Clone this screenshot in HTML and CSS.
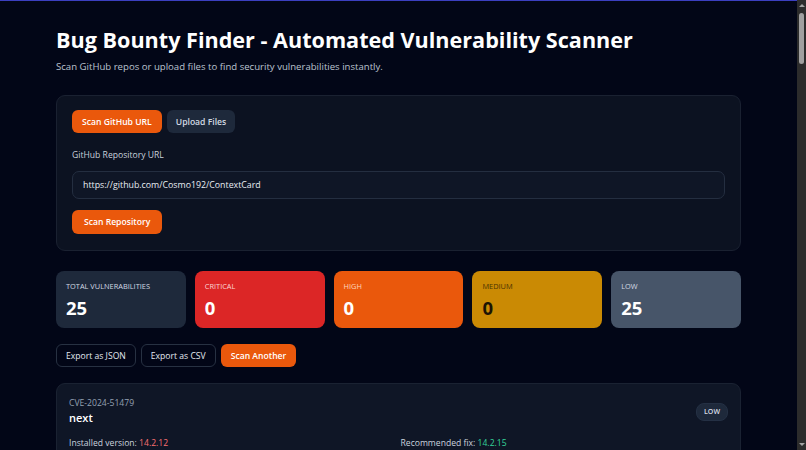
FILE: index.html
```html
<!DOCTYPE html>
<html lang="en">
<head>
<meta charset="utf-8">
<title>Bug Bounty Finder</title>
<link rel="stylesheet" href="styles.css">
</head>
<body>
<div class="accent-bar"></div>
<main class="page">
  <header class="hero">
    <h1 class="hero-title">Bug Bounty Finder - Automated Vulnerability Scanner</h1>
    <p class="hero-sub">Scan GitHub repos or upload files to find security vulnerabilities instantly.</p>
  </header>

  <section class="panel scan-form">
    <div class="tabs">
      <button class="btn btn-primary">Scan GitHub URL</button>
      <button class="btn btn-muted">Upload Files</button>
    </div>
    <label class="field-label" for="repo">GitHub Repository URL</label>
    <input class="url-input" id="repo" type="text" value="https://github.com/Cosmo192/ContextCard">
    <button class="btn btn-primary btn-submit">Scan Repository</button>
  </section>

  <section class="stats">
    <div class="stat stat-total"><span class="stat-label">TOTAL VULNERABILITIES</span><span class="stat-value">25</span></div>
    <div class="stat stat-critical"><span class="stat-label">CRITICAL</span><span class="stat-value">0</span></div>
    <div class="stat stat-high"><span class="stat-label">HIGH</span><span class="stat-value">0</span></div>
    <div class="stat stat-medium"><span class="stat-label">MEDIUM</span><span class="stat-value">0</span></div>
    <div class="stat stat-low"><span class="stat-label">LOW</span><span class="stat-value">25</span></div>
  </section>

  <div class="actions">
    <button class="btn btn-outline">Export as JSON</button>
    <button class="btn btn-outline">Export as CSV</button>
    <button class="btn btn-primary">Scan Another</button>
  </div>

  <section class="results">
    <article class="vuln">
      <div class="vuln-head">
        <div><div class="vuln-id">CVE-2024-51479</div><div class="vuln-pkg">next</div></div>
        <span class="badge">LOW</span>
      </div>
      <div class="vuln-versions">
        <div>Installed version: <span class="ver-bad">14.2.12</span></div>
        <div>Recommended fix: <span class="ver-good">14.2.15</span></div>
      </div>
      <p class="vuln-desc">Authorization bypass in Next.js middleware for pages directly under the application's root directory.</p>
    </article>
    <article class="vuln">
      <div class="vuln-head"><div><div class="vuln-id">CVE-2024-56332</div><div class="vuln-pkg">next</div></div><span class="badge">LOW</span></div>
      <div class="vuln-versions"><div>Installed version: <span class="ver-bad">14.2.12</span></div><div>Recommended fix: <span class="ver-good">14.2.21</span></div></div>
      <p class="vuln-desc">Denial of service with Server Actions when requests are left hanging until the hosting provider cancels them.</p>
    </article>
    <article class="vuln">
      <div class="vuln-head"><div><div class="vuln-id">CVE-2025-29927</div><div class="vuln-pkg">next</div></div><span class="badge">LOW</span></div>
      <div class="vuln-versions"><div>Installed version: <span class="ver-bad">14.2.12</span></div><div>Recommended fix: <span class="ver-good">14.2.25</span></div></div>
      <p class="vuln-desc">Authorization bypass through the x-middleware-subrequest header.</p>
    </article>
    <article class="vuln">
      <div class="vuln-head"><div><div class="vuln-id">CVE-2024-21538</div><div class="vuln-pkg">cross-spawn</div></div><span class="badge">LOW</span></div>
      <div class="vuln-versions"><div>Installed version: <span class="ver-bad">7.0.3</span></div><div>Recommended fix: <span class="ver-good">7.0.5</span></div></div>
      <p class="vuln-desc">Regular expression denial of service caused by improper input sanitization.</p>
    </article>
    <article class="vuln">
      <div class="vuln-head"><div><div class="vuln-id">CVE-2024-55565</div><div class="vuln-pkg">nanoid</div></div><span class="badge">LOW</span></div>
      <div class="vuln-versions"><div>Installed version: <span class="ver-bad">3.3.7</span></div><div>Recommended fix: <span class="ver-good">3.3.8</span></div></div>
      <p class="vuln-desc">Predictable results in nanoid generation when given non-integer values.</p>
    </article>
    <article class="vuln">
      <div class="vuln-head"><div><div class="vuln-id">CVE-2025-27789</div><div class="vuln-pkg">@babel/runtime</div></div><span class="badge">LOW</span></div>
      <div class="vuln-versions"><div>Installed version: <span class="ver-bad">7.24.5</span></div><div>Recommended fix: <span class="ver-good">7.26.10</span></div></div>
      <p class="vuln-desc">Inefficient RegExp complexity in generated code when transpiling named capturing groups.</p>
    </article>
    <article class="vuln">
      <div class="vuln-head"><div><div class="vuln-id">CVE-2025-5889</div><div class="vuln-pkg">brace-expansion</div></div><span class="badge">LOW</span></div>
      <div class="vuln-versions"><div>Installed version: <span class="ver-bad">1.1.11</span></div><div>Recommended fix: <span class="ver-good">1.1.12</span></div></div>
      <p class="vuln-desc">Regular expression denial of service in the expand function.</p>
    </article>
    <article class="vuln">
      <div class="vuln-head"><div><div class="vuln-id">CVE-2024-4067</div><div class="vuln-pkg">micromatch</div></div><span class="badge">LOW</span></div>
      <div class="vuln-versions"><div>Installed version: <span class="ver-bad">4.0.5</span></div><div>Recommended fix: <span class="ver-good">4.0.8</span></div></div>
      <p class="vuln-desc">Regular expression denial of service in micromatch.braces().</p>
    </article>
    <article class="vuln">
      <div class="vuln-head"><div><div class="vuln-id">CVE-2024-4068</div><div class="vuln-pkg">braces</div></div><span class="badge">LOW</span></div>
      <div class="vuln-versions"><div>Installed version: <span class="ver-bad">3.0.2</span></div><div>Recommended fix: <span class="ver-good">3.0.3</span></div></div>
      <p class="vuln-desc">Uncontrolled resource consumption when parsing imbalanced braces.</p>
    </article>
    <article class="vuln">
      <div class="vuln-head"><div><div class="vuln-id">CVE-2023-44270</div><div class="vuln-pkg">postcss</div></div><span class="badge">LOW</span></div>
      <div class="vuln-versions"><div>Installed version: <span class="ver-bad">8.4.24</span></div><div>Recommended fix: <span class="ver-good">8.4.31</span></div></div>
      <p class="vuln-desc">Line return parsing error when linting untrusted CSS.</p>
    </article>
    <article class="vuln">
      <div class="vuln-head"><div><div class="vuln-id">CVE-2024-43799</div><div class="vuln-pkg">send</div></div><span class="badge">LOW</span></div>
      <div class="vuln-versions"><div>Installed version: <span class="ver-bad">0.18.0</span></div><div>Recommended fix: <span class="ver-good">0.19.0</span></div></div>
      <p class="vuln-desc">Template injection that can lead to cross-site scripting.</p>
    </article>
    <article class="vuln">
      <div class="vuln-head"><div><div class="vuln-id">CVE-2024-43800</div><div class="vuln-pkg">serve-static</div></div><span class="badge">LOW</span></div>
      <div class="vuln-versions"><div>Installed version: <span class="ver-bad">1.15.0</span></div><div>Recommended fix: <span class="ver-good">1.16.0</span></div></div>
      <p class="vuln-desc">Template injection that can lead to cross-site scripting.</p>
    </article>
    <article class="vuln">
      <div class="vuln-head"><div><div class="vuln-id">CVE-2024-45296</div><div class="vuln-pkg">path-to-regexp</div></div><span class="badge">LOW</span></div>
      <div class="vuln-versions"><div>Installed version: <span class="ver-bad">0.1.7</span></div><div>Recommended fix: <span class="ver-good">0.1.10</span></div></div>
      <p class="vuln-desc">Backtracking regular expressions cause a denial of service.</p>
    </article>
    <article class="vuln">
      <div class="vuln-head"><div><div class="vuln-id">CVE-2024-47764</div><div class="vuln-pkg">cookie</div></div><span class="badge">LOW</span></div>
      <div class="vuln-versions"><div>Installed version: <span class="ver-bad">0.6.0</span></div><div>Recommended fix: <span class="ver-good">0.7.0</span></div></div>
      <p class="vuln-desc">Accepts cookie name, path and domain with out of bounds characters.</p>
    </article>
    <article class="vuln">
      <div class="vuln-head"><div><div class="vuln-id">CVE-2024-45590</div><div class="vuln-pkg">body-parser</div></div><span class="badge">LOW</span></div>
      <div class="vuln-versions"><div>Installed version: <span class="ver-bad">1.20.2</span></div><div>Recommended fix: <span class="ver-good">1.20.3</span></div></div>
      <p class="vuln-desc">Denial of service when url encoding is enabled.</p>
    </article>
    <article class="vuln">
      <div class="vuln-head"><div><div class="vuln-id">CVE-2024-29041</div><div class="vuln-pkg">express</div></div><span class="badge">LOW</span></div>
      <div class="vuln-versions"><div>Installed version: <span class="ver-bad">4.18.2</span></div><div>Recommended fix: <span class="ver-good">4.19.2</span></div></div>
      <p class="vuln-desc">Open redirect in malformed URLs.</p>
    </article>
    <article class="vuln">
      <div class="vuln-head"><div><div class="vuln-id">CVE-2024-37890</div><div class="vuln-pkg">ws</div></div><span class="badge">LOW</span></div>
      <div class="vuln-versions"><div>Installed version: <span class="ver-bad">8.16.0</span></div><div>Recommended fix: <span class="ver-good">8.17.1</span></div></div>
      <p class="vuln-desc">Denial of service when handling a request with many HTTP headers.</p>
    </article>
    <article class="vuln">
      <div class="vuln-head"><div><div class="vuln-id">CVE-2025-30208</div><div class="vuln-pkg">vite</div></div><span class="badge">LOW</span></div>
      <div class="vuln-versions"><div>Installed version: <span class="ver-bad">5.4.8</span></div><div>Recommended fix: <span class="ver-good">5.4.15</span></div></div>
      <p class="vuln-desc">Bypass of server.fs.deny with query parameters.</p>
    </article>
    <article class="vuln">
      <div class="vuln-head"><div><div class="vuln-id">CVE-2025-24010</div><div class="vuln-pkg">vite</div></div><span class="badge">LOW</span></div>
      <div class="vuln-versions"><div>Installed version: <span class="ver-bad">5.4.8</span></div><div>Recommended fix: <span class="ver-good">5.4.12</span></div></div>
      <p class="vuln-desc">Websites were able to send any requests to the development server and read the response.</p>
    </article>
    <article class="vuln">
      <div class="vuln-head"><div><div class="vuln-id">CVE-2024-24790</div><div class="vuln-pkg">esbuild</div></div><span class="badge">LOW</span></div>
      <div class="vuln-versions"><div>Installed version: <span class="ver-bad">0.21.5</span></div><div>Recommended fix: <span class="ver-good">0.25.0</span></div></div>
      <p class="vuln-desc">Development server allows any website to send requests and read the response.</p>
    </article>
    <article class="vuln">
      <div class="vuln-head"><div><div class="vuln-id">CVE-2024-52798</div><div class="vuln-pkg">path-to-regexp</div></div><span class="badge">LOW</span></div>
      <div class="vuln-versions"><div>Installed version: <span class="ver-bad">0.1.10</span></div><div>Recommended fix: <span class="ver-good">0.1.12</span></div></div>
      <p class="vuln-desc">ReDoS in path-to-regexp 0.1.x.</p>
    </article>
    <article class="vuln">
      <div class="vuln-head"><div><div class="vuln-id">CVE-2024-47068</div><div class="vuln-pkg">rollup</div></div><span class="badge">LOW</span></div>
      <div class="vuln-versions"><div>Installed version: <span class="ver-bad">4.21.0</span></div><div>Recommended fix: <span class="ver-good">4.22.4</span></div></div>
      <p class="vuln-desc">DOM clobbering gadget found in rollup bundled scripts that leads to XSS.</p>
    </article>
    <article class="vuln">
      <div class="vuln-head"><div><div class="vuln-id">CVE-2025-27152</div><div class="vuln-pkg">axios</div></div><span class="badge">LOW</span></div>
      <div class="vuln-versions"><div>Installed version: <span class="ver-bad">1.7.7</span></div><div>Recommended fix: <span class="ver-good">1.8.2</span></div></div>
      <p class="vuln-desc">Possible SSRF and credential leakage via absolute URL.</p>
    </article>
    <article class="vuln">
      <div class="vuln-head"><div><div class="vuln-id">CVE-2024-28849</div><div class="vuln-pkg">follow-redirects</div></div><span class="badge">LOW</span></div>
      <div class="vuln-versions"><div>Installed version: <span class="ver-bad">1.15.5</span></div><div>Recommended fix: <span class="ver-good">1.15.6</span></div></div>
      <p class="vuln-desc">Proxy-Authorization header kept across hosts.</p>
    </article>
    <article class="vuln">
      <div class="vuln-head"><div><div class="vuln-id">CVE-2025-22150</div><div class="vuln-pkg">undici</div></div><span class="badge">LOW</span></div>
      <div class="vuln-versions"><div>Installed version: <span class="ver-bad">5.28.4</span></div><div>Recommended fix: <span class="ver-good">5.28.5</span></div></div>
      <p class="vuln-desc">Use of insufficiently random values for multipart boundaries.</p>
    </article>
  </section>
</main>

<!-- window scrollbar, drawn over the right edge -->
<div class="scroll-rail" aria-hidden="true">
  <span class="scroll-arrow scroll-up"></span>
  <span class="scroll-thumb"></span>
  <span class="scroll-arrow scroll-down"></span>
</div>
</body>
</html>
```

FILE: styles.css
```css
html {
  background: #020617;
}

body {
  margin: 0;
  padding-right: 9px;
  background: #020617;
  color: #f1f5f9;
  font-family: "Open Sans", "Noto Sans", sans-serif;
}

.accent-bar {
  height: 1px;
  background: #3b3fc0;
}

.page {
  max-width: 685px;
  margin: 0 auto;
  padding: 24px 0 40px;
}

/* heading */
.hero-title {
  margin: 0;
  font-size: 21.6px;
  line-height: 30px;
  font-weight: 700;
  color: #ffffff;
}

.hero-sub {
  margin: 5px 0 0;
  font-size: 9.6px;
  line-height: 14px;
  color: #bcc4cf;
}

/* scan form */
.panel {
  margin-top: 21px;
  background: #0c1221;
  border: 1px solid #1a2131;
  border-radius: 9px;
}

.scan-form {
  display: flex;
  flex-direction: column;
  align-items: flex-start;
  padding: 14px 15px 16px;
}

.tabs {
  display: flex;
  gap: 5px;
}

.btn {
  height: 23px;
  padding: 0 10px;
  border: none;
  border-radius: 6px;
  font-family: inherit;
  font-size: 8.6px;
  font-weight: 600;
  color: #ffffff;
  cursor: pointer;
}

.btn-primary {
  background: #ea580c;
}

.btn-muted {
  background: #1e293b;
  color: #d2d9e3;
  padding: 0 9px;
}

.btn-outline {
  padding: 0 9px;
  background: transparent;
  border: 1px solid #273142;
  color: #e2e8f0;
  font-weight: 500;
}

.btn-submit {
  height: 24px;
  margin-top: 11px;
  padding: 0 12px;
}

.field-label {
  margin-top: 16px;
  font-size: 8.6px;
  font-weight: 500;
  color: #c9d1dc;
}

.url-input {
  box-sizing: border-box;
  width: 100%;
  height: 28px;
  margin-top: 10px;
  padding: 0 10px;
  background: #0f1626;
  border: 1px solid #242e40;
  border-radius: 7px;
  color: #e8edf3;
  font-family: inherit;
  font-size: 8.8px;
  outline: none;
}

/* summary cards */
.stats {
  display: grid;
  grid-template-columns: repeat(5, 1fr);
  gap: 9px;
  margin-top: 20px;
}

.stat {
  display: flex;
  flex-direction: column;
  height: 57px;
  box-sizing: border-box;
  padding: 10px 10px 0;
  border-radius: 8px;
  color: #ffffff;
}

.stat-label {
  font-size: 7.4px;
  line-height: 10px;
  text-transform: uppercase;
  color: #d3d9e2;
}

.stat-value {
  margin-top: 5px;
  font-size: 18.5px;
  line-height: 24px;
  font-weight: 700;
}

.stat-total { background: #1e293b; }
.stat-critical { background: #dc2626; }
.stat-critical .stat-label { color: #fbd5d5; }
.stat-high { background: #ea580c; }
.stat-high .stat-label { color: #fed7bd; }
.stat-medium { background: #ca8a04; color: #1c1404; }
.stat-medium .stat-label { color: #4a3303; }
.stat-low { background: #475569; }
.stat-low .stat-label { color: #d3dae4; }

/* export row */
.actions {
  display: flex;
  gap: 5px;
  margin-top: 16px;
}

/* findings */
.results {
  display: flex;
  flex-direction: column;
  gap: 12px;
  margin-top: 16px;
}

.vuln {
  padding: 13px 12px 14px;
  background: #0f1626;
  border: 1px solid #1a2232;
  border-radius: 9px;
}

.vuln-head {
  display: flex;
  justify-content: space-between;
  align-items: flex-start;
}

.vuln-id {
  font-size: 8.6px;
  line-height: 13px;
  color: #94a0b2;
}

.vuln-pkg {
  font-size: 11px;
  line-height: 16px;
  font-weight: 600;
  color: #ffffff;
}

.badge {
  margin-top: 6px;
  padding: 0 7px;
  height: 16px;
  line-height: 16px;
  border-radius: 8px;
  background: #1e293b;
  border: 1px solid #243044;
  font-size: 7px;
  font-weight: 600;
  color: #d6dde7;
}

.vuln-versions {
  display: grid;
  grid-template-columns: 1fr 1fr;
  column-gap: 4px;
  margin-top: 11px;
  font-size: 8.6px;
  line-height: 13px;
  color: #cbd3de;
}

.ver-bad { color: #f87171; }
.ver-good { color: #34d399; }

.vuln-desc {
  margin: 10px 0 0;
  font-size: 8.6px;
  line-height: 13px;
  color: #9aa5b6;
}

/* window scrollbar */
.scroll-rail {
  position: fixed;
  top: 0;
  right: 0;
  bottom: 0;
  width: 9px;
  display: flex;
  flex-direction: column;
  align-items: center;
  background: #2c2c2c;
}

.scroll-arrow {
  display: block;
  width: 0;
  height: 0;
  border-left: 3px solid transparent;
  border-right: 3px solid transparent;
}

.scroll-up {
  margin-top: 4px;
  border-bottom: 3px solid #a3a3a3;
}

.scroll-down {
  margin-top: auto;
  margin-bottom: 4px;
  border-top: 3px solid #a3a3a3;
}

.scroll-thumb {
  display: block;
  width: 5px;
  height: 51px;
  margin-top: 6px;
  border-radius: 3px;
  background: #a0a0a0;
}
```
